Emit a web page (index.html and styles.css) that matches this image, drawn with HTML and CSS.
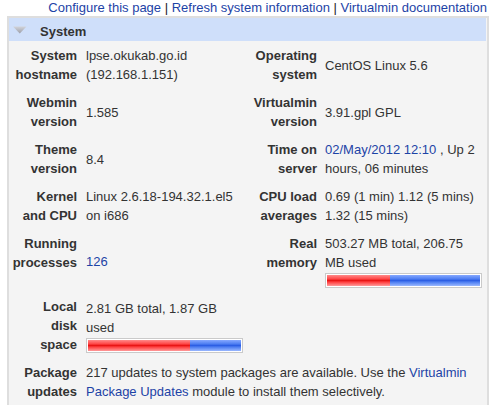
FILE: index.html
```html
<!DOCTYPE html>
<html>
<head>
    <title>System Information</title>
    <link rel="stylesheet" href="styles.css">
</head>
<body>
<div class="links">
    <a href="#">Configure this page</a> | <a href="#">Refresh system information</a> | <a href="#">Virtualmin documentation</a>
</div>
<div class="box">
    <div class="box-head">
        <svg class="arrow" width="14" height="8" viewBox="0 0 14 8">
            <defs>
                <linearGradient id="tri" x1="0" y1="0" x2="0" y2="1">
                    <stop offset="0" stop-color="#d2d4da"/>
                    <stop offset="1" stop-color="#9c9ea8"/>
                </linearGradient>
            </defs>
            <polygon points="0,0.5 13.5,0.5 6.75,7.5" fill="url(#tri)"/>
        </svg>
        <span>System</span>
    </div>
    <div class="info">
        <div class="label">System<br>hostname</div>
        <div class="value">lpse.okukab.go.id (192.168.1.151)</div>
        <div class="label">Operating<br>system</div>
        <div class="value">CentOS Linux 5.6</div>

        <div class="label">Webmin<br>version</div>
        <div class="value">1.585</div>
        <div class="label">Virtualmin<br>version</div>
        <div class="value">3.91.gpl GPL</div>

        <div class="label">Theme<br>version</div>
        <div class="value">8.4</div>
        <div class="label">Time on<br>server</div>
        <div class="value"><a href="#">02/May/2012 12:10</a> , Up 2 hours, 06 minutes</div>

        <div class="label">Kernel<br>and CPU</div>
        <div class="value">Linux 2.6.18-194.32.1.el5 on i686</div>
        <div class="label">CPU load<br>averages</div>
        <div class="value">0.69 (1 min) 1.12 (5 mins) 1.32 (15 mins)</div>

        <div class="label">Running<br>processes</div>
        <div class="value"><a href="#">126</a></div>
        <div class="label">Real<br>memory</div>
        <div class="value">
            503.27 MB total, 206.75 MB used
            <div class="bar"><div class="bar-used" style="width: 41%"></div><div class="bar-free"></div></div>
        </div>

        <div class="label">Local<br>disk<br>space</div>
        <div class="value">
            2.81 GB total, 1.87 GB used
            <div class="bar"><div class="bar-used" style="width: 66.5%"></div><div class="bar-free"></div></div>
        </div>
        <div></div>
        <div></div>

        <div class="label">Package<br>updates</div>
        <div class="value wide">217 updates to system packages are available. Use the <a href="#">Virtualmin Package Updates</a> module to install them selectively.</div>
    </div>
</div>
</body>
</html>
```

FILE: styles.css
```css
* {
    margin: 0;
    padding: 0;
    box-sizing: border-box;
}

body {
    font-family: "Liberation Sans", Arial, sans-serif;
    font-size: 13px;
    color: #333;
    background: #fff;
}

a {
    color: #1d43a6;
    text-decoration: none;
}

.links {
    height: 16px;
    line-height: 16px;
    text-align: right;
    padding-right: 7px;
    color: #222;
}

.box {
    margin-left: 7px;
    width: 482px;
    height: 389px;
    border: 2px solid #dedede;
    border-bottom: 0;
    background: #f4f4f4;
}

.box-head {
    height: 23px;
    margin-right: 1px;
    background: #cfdffa;
    display: flex;
    align-items: center;
    font-weight: bold;
    color: #333;
}

.arrow {
    margin-left: 4px;
    margin-right: 13px;
    margin-top: 1px;
}

.box-head span {
    padding-top: 3px;
}

.info {
    display: grid;
    grid-template-columns: 72px 170px 70px 1fr;
    row-gap: 9px;
    padding-top: 5px;
    line-height: 19px;
}

.label {
    align-self: start;
    text-align: right;
    font-weight: bold;
    white-space: nowrap;
    padding-right: 4px;
}

.value {
    align-self: center;
    padding-left: 5px;
    padding-right: 9px;
}

.value:nth-child(4n) {
    padding-left: 4px;
    padding-right: 4px;
}

.wide {
    grid-column: 2 / 5;
    padding-right: 4px;
}

.bar {
    width: 157px;
    height: 15px;
    margin-top: 1px;
    padding: 1px;
    border: 1px solid #cacaca;
    background: #fff;
    display: flex;
}

.bar-used {
    background: linear-gradient(#ff8a8a, #ff4848 35%, #e81515 50%, #ff4242 65%, #ff9a9a);
}

.bar-free {
    flex: 1;
    background: linear-gradient(#86a8ff, #4f7ff2 35%, #2c5ee4 50%, #4f7ff2 65%, #9ab8ff);
}
```
